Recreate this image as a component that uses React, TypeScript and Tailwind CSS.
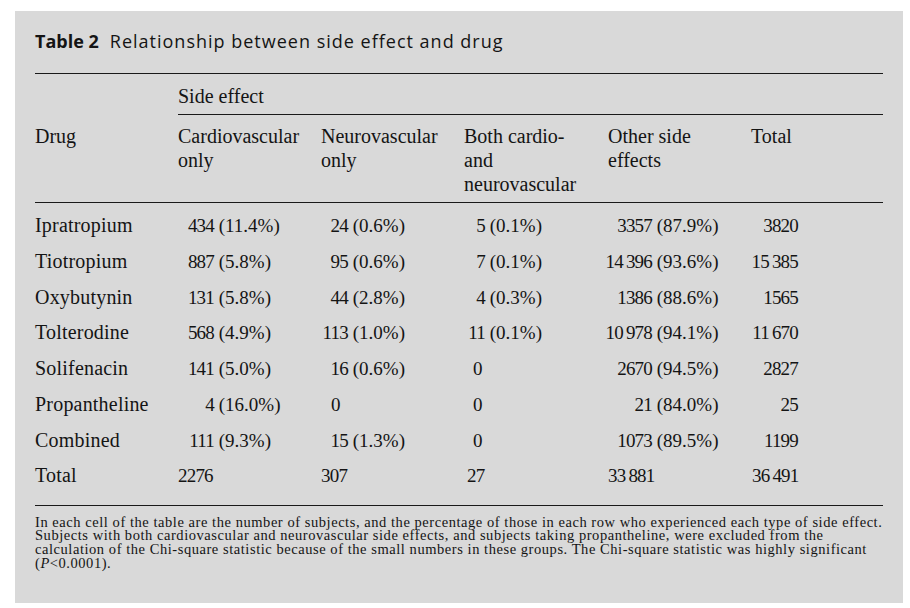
import React from 'react'

type Cell = { n: string; p?: string; off?: number; plain?: boolean }

const cols = ['w-[143px]', 'w-[143px]', 'w-[143px]', 'w-[144px]', 'w-[143px]', 'w-[132px]']
// box that right-aligns the number inside each data column
const numBox = [
  'w-[44px] -ml-[8px]',
  'w-[35px] -ml-[8px]',
  'w-[29px] -ml-[8px]',
  'w-[54px] -ml-[10px]',
  'w-[57px] -ml-[10px]',
]

const rows: { drug: string; cells: Cell[] }[] = [
  { drug: 'Ipratropium', cells: [{ n: '434', p: '11.4%' }, { n: '24', p: '0.6%' }, { n: '5', p: '0.1%' }, { n: '3357', p: '87.9%' }, { n: '3820' }] },
  { drug: 'Tiotropium', cells: [{ n: '887', p: '5.8%' }, { n: '95', p: '0.6%' }, { n: '7', p: '0.1%' }, { n: '14\u2009396', p: '93.6%' }, { n: '15\u2009385' }] },
  { drug: 'Oxybutynin', cells: [{ n: '131', p: '5.8%' }, { n: '44', p: '2.8%' }, { n: '4', p: '0.3%' }, { n: '1386', p: '88.6%' }, { n: '1565' }] },
  { drug: 'Tolterodine', cells: [{ n: '568', p: '4.9%' }, { n: '113', p: '1.0%' }, { n: '11', p: '0.1%' }, { n: '10\u2009978', p: '94.1%' }, { n: '11\u2009670' }] },
  { drug: 'Solifenacin', cells: [{ n: '141', p: '5.0%' }, { n: '16', p: '0.6%' }, { n: '0', plain: true, off: 9 }, { n: '2670', p: '94.5%' }, { n: '2827' }] },
  { drug: 'Propantheline', cells: [{ n: '4', p: '16.0%' }, { n: '0', plain: true, off: 10 }, { n: '0', plain: true, off: 9 }, { n: '21', p: '84.0%' }, { n: '25' }] },
  { drug: 'Combined', cells: [{ n: '111', p: '9.3%' }, { n: '15', p: '1.3%' }, { n: '0', plain: true, off: 9 }, { n: '1073', p: '89.5%' }, { n: '1199' }] },
  { drug: 'Total', cells: [{ n: '2276', plain: true, off: 0 }, { n: '307', plain: true, off: 0 }, { n: '27', plain: true, off: 3 }, { n: '33\u2009881', plain: true, off: 0 }, { n: '36\u2009491', plain: true, off: 1 }] },
]

const offs: Record<number, string> = {
  0: 'pl-0',
  1: 'pl-[1px]',
  3: 'pl-[3px]',
  9: 'pl-[9px]',
  10: 'pl-[10px]',
}

function DataCell({ cell, col }: { cell: Cell; col: number }) {
  if (cell.plain) {
    return (
      <div className={`${cols[col + 1]} ${offs[cell.off ?? 0]} text-[19px] tracking-[-0.8px]`}>
        {cell.n}
      </div>
    )
  }
  return (
    <div className={`${cols[col + 1]} text-[19px] whitespace-nowrap`}>
      <span className={`inline-block ${numBox[col]} text-right tracking-[-0.8px]`}>{cell.n}</span>
      {cell.p ? <span> ({cell.p})</span> : null}
    </div>
  )
}

export default function App() {
  return (
    <div className="w-[910px] h-[608px] bg-white pt-[11px] pl-[15px]">
      <div
        className="w-[888px] h-[592px] bg-[#d9d9d9] px-[20px] text-[#141414]"
        style={{ fontFamily: '"Liberation Serif", serif' }}
      >
        <div
          className="h-[62px] pt-[18px] text-[18px] leading-[24px] whitespace-nowrap"
          style={{ fontFamily: '"Open Sans", sans-serif' }}
        >
          <span className="font-bold">Table 2</span>
          <span className="ml-[11px] tracking-[1px]">Relationship between side effect and drug</span>
        </div>

        <div className="flex border-t border-[#1a1a1a] text-[20px] leading-[24px]">
          <div className="w-[143px] pt-[50px]">Drug</div>
          <div className="flex-1">
            <div className="pt-[10px] pb-[6px] border-b border-[#1a1a1a]">Side effect</div>
            <div className="flex pt-[9px] pb-[6px]">
              <div className="w-[143px]">Cardiovascular<br />only</div>
              <div className="w-[143px]">Neurovascular<br />only</div>
              <div className="w-[144px]">Both cardio-<br />and<br />neurovascular</div>
              <div className="w-[143px]">Other side<br />effects</div>
              <div className="w-[132px]">Total</div>
            </div>
          </div>
        </div>

        <div className="border-t border-[#1a1a1a] pt-[5.4px] pb-[11px]">
          {rows.map((row) => (
            <div key={row.drug} className="flex h-[35.7px] leading-[35.7px]">
              <div className="w-[143px] text-[20px] tracking-[0.2px]">{row.drug}</div>
              {row.cells.map((cell, i) => (
                <DataCell key={i} cell={cell} col={i} />
              ))}
            </div>
          ))}
        </div>

        <div className="border-t border-[#1a1a1a] pt-[10px] text-[14.5px] leading-[13.6px] tracking-[0.55px] whitespace-nowrap">
          <div>
            In each cell of the table are the number of subjects, and the percentage of those in each row who experienced each type of side effect.
          </div>
          <div>
            Subjects with both cardiovascular and neurovascular side effects, and subjects taking propantheline, were excluded from the
          </div>
          <div>
            calculation of the Chi-square statistic because of the small numbers in these groups. The Chi-square statistic was highly significant
          </div>
          <div>
            (<i>P</i>&lt;0.0001).
          </div>
        </div>
      </div>
    </div>
  )
}
